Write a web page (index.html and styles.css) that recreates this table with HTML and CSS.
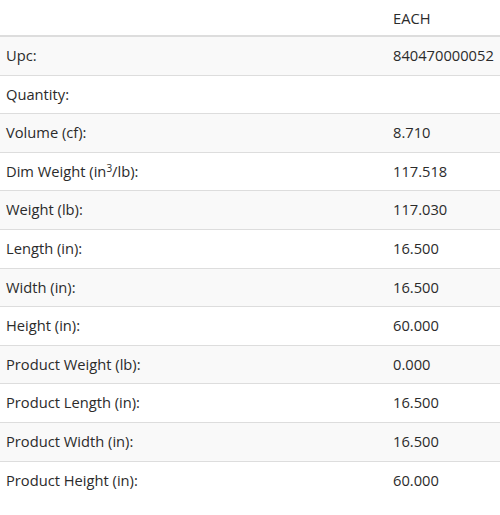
FILE: index.html
```html
<!DOCTYPE html>
<html>
<head>
<meta charset="utf-8">
<link rel="stylesheet" href="styles.css">
</head>
<body>
<table class="spec-table">
  <thead>
    <tr><th class="label"></th><th class="value">EACH</th></tr>
  </thead>
  <tbody>
    <tr><td class="label">Upc:</td><td class="value">840470000052</td></tr>
    <tr><td class="label">Quantity:</td><td class="value"></td></tr>
    <tr><td class="label">Volume (cf):</td><td class="value">8.710</td></tr>
    <tr><td class="label">Dim Weight (in<sup>3</sup>/lb):</td><td class="value">117.518</td></tr>
    <tr><td class="label">Weight (lb):</td><td class="value">117.030</td></tr>
    <tr><td class="label">Length (in):</td><td class="value">16.500</td></tr>
    <tr><td class="label">Width (in):</td><td class="value">16.500</td></tr>
    <tr><td class="label">Height (in):</td><td class="value">60.000</td></tr>
    <tr><td class="label">Product Weight (lb):</td><td class="value">0.000</td></tr>
    <tr><td class="label">Product Length (in):</td><td class="value">16.500</td></tr>
    <tr><td class="label">Product Width (in):</td><td class="value">16.500</td></tr>
    <tr><td class="label">Product Height (in):</td><td class="value">60.000</td></tr>
  </tbody>
</table>
</body>
</html>
```
FILE: styles.css
```css
html, body {
  margin: 0;
  padding: 0;
  background: #fff;
}
body {
  font-family: "Open Sans", "Noto Sans", sans-serif;
  font-size: 14.7px;
  color: #2b2b2b;
}
.spec-table {
  width: 500px;
  border-collapse: collapse;
  border-spacing: 0;
}
.spec-table th,
.spec-table td {
  padding: 8px 5px 8px 6px;
  text-align: left;
  font-weight: normal;
  vertical-align: top;
}
.spec-table th {
  height: 20px;
  line-height: 20px;
  padding-bottom: 7px;
  border-bottom: 2px solid #ddd;
}
.spec-table td {
  height: 21.6px;
  line-height: 21.6px;
  border-top: 1px solid #ddd;
}
.spec-table tbody tr:first-child td {
  border-top: 0;
}
.spec-table tbody tr:nth-child(odd) td {
  background: #f9f9f9;
}
.spec-table .label {
  width: 374px;
}
.spec-table .value {
  padding-left: 8px;
}
.spec-table sup {
  font-size: 10px;
  line-height: 0;
  vertical-align: 5px;
}
```
